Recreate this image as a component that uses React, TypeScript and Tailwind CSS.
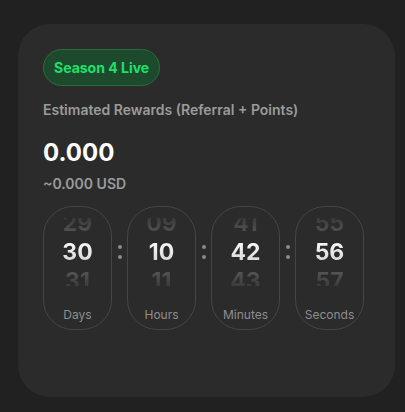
import React from "react"

type Unit = { label: string; prev: string; value: string; next: string }

const units: Unit[] = [
  { label: "Days", prev: "29", value: "30", next: "31" },
  { label: "Hours", prev: "09", value: "10", next: "11" },
  { label: "Minutes", prev: "41", value: "42", next: "43" },
  { label: "Seconds", prev: "55", value: "56", next: "57" },
]

function Dial({ unit }: { unit: Unit }) {
  return (
    <div className="w-[69px] h-[124px] flex flex-col items-center rounded-[30px] border border-[#454545] pt-[11px]">
      {/* rolling digits, neighbours fade out */}
      <div className="h-[68px] w-full overflow-hidden flex flex-col items-center justify-center">
        <span className="h-[29px] shrink-0 leading-[29px] text-[23px] font-bold bg-gradient-to-b from-transparent to-[#5c5c5c] bg-clip-text text-transparent">
          {unit.prev}
        </span>
        <span className="h-[29px] shrink-0 leading-[29px] text-[23px] font-bold bg-gradient-to-b from-white to-[#d0d0d0] bg-clip-text text-transparent">
          {unit.value}
        </span>
        <span className="h-[29px] shrink-0 leading-[29px] text-[23px] font-bold bg-gradient-to-b from-[#5c5c5c] to-transparent bg-clip-text text-transparent">
          {unit.next}
        </span>
      </div>
      <span className="mt-[21px] text-[12px] leading-4 text-[#8e8e8e]">{unit.label}</span>
    </div>
  )
}

function Colon() {
  return (
    <div className="w-[15px] h-[124px] flex flex-col items-center pt-[39px] gap-[6px]">
      <span className="w-[4px] h-[4px] rounded-full bg-[#8a8a8a]" />
      <span className="w-[4px] h-[4px] rounded-full bg-[#8a8a8a]" />
    </div>
  )
}

export default function App() {
  return (
    <div className="w-[405px] h-[412px] bg-[#212121] pt-[24px] pl-[18px] font-['Inter',sans-serif]">
      <div className="w-[377px] h-[373px] rounded-[32px] bg-[#2b2b2b] pt-[25px] px-[25px]">
        <div className="inline-flex items-center h-[37px] px-[10px] rounded-full bg-[#1d4a2c] border border-[#2a6c3e]">
          <span className="text-[14px] font-bold text-[#1fe06c]">Season 4 Live</span>
        </div>

        <p className="mt-[15px] text-[14px] leading-[18px] font-semibold text-[#9b9b9b]">
          Estimated Rewards (Referral + Points)
        </p>

        <p className="mt-[18px] text-[24px] leading-8 font-bold text-white">0.000</p>
        <p className="mt-[6px] text-[14px] leading-[18px] font-semibold text-[#9b9b9b]">~0.000 USD</p>

        <div className="mt-[13px] flex">
          {units.map((u, i) => (
            <React.Fragment key={u.label}>
              {i > 0 && <Colon />}
              <Dial unit={u} />
            </React.Fragment>
          ))}
        </div>
      </div>
    </div>
  )
}
